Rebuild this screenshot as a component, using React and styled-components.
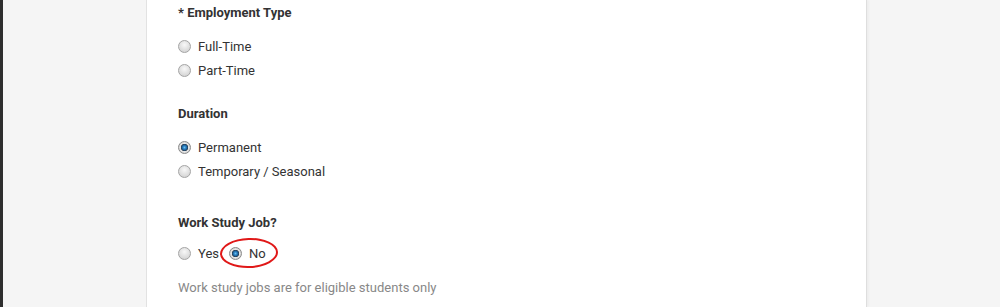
import React from "react";
import styled, { createGlobalStyle } from "styled-components";

const Global = createGlobalStyle`
  html, body { margin: 0; padding: 0; }
  body { font-family: Roboto, "Liberation Sans", Arial, sans-serif; overflow: hidden; }
`;

const Page = styled.div`
  display: flex;
  height: 307px;
  background: #f5f5f5;
  border-left: 3px solid #2e2e2e;
  box-sizing: border-box;
`;

const Panel = styled.div`
  margin-left: 143px;
  width: 721px;
  background: #fff;
  border-left: 1px solid #e2e2e2;
  border-right: 1px solid #dedede;
  box-shadow: 2px 0 2px rgba(0, 0, 0, 0.03);
  padding: 3px 0 0 31px;
  box-sizing: border-box;
`;

const Section = styled.section`
  margin-top: ${(p) => p.$top || 0}px;
`;

const Heading = styled.div`
  font-size: 13px;
  font-weight: 700;
  line-height: 20px;
  color: #333;
  margin-bottom: ${(p) => p.$gap ?? 11}px;
`;

const Options = styled.div`
  display: flex;
  flex-direction: ${(p) => (p.$inline ? "row" : "column")};
  gap: ${(p) => (p.$inline ? "10px" : "0")};
`;

const Option = styled.label`
  position: relative;
  display: flex;
  align-items: center;
  height: 24px;
  font-size: 13px;
  color: #333;
  gap: 7px;
`;

const Radio = styled.input.attrs({ type: "radio" })`
  appearance: none;
  -webkit-appearance: none;
  margin: 0;
  width: 13px;
  height: 13px;
  border-radius: 50%;
  border: 1px solid #a4a4a4;
  box-sizing: border-box;
  background: radial-gradient(circle at 50% 35%, #f8f8f8 0, #e4e4e4 45%, #cccccc 100%);
  &:checked {
    border-color: #8a8a8a;
    background: radial-gradient(
      circle at 50% 50%,
      #6cc0f0 0,
      #2a7fc0 1.6px,
      #1d5f98 2.6px,
      #2a3a4a 3.4px,
      #e6e6e6 4px,
      #d0d0d0 6px
    );
  }
`;

const Highlight = styled.span`
  position: absolute;
  left: -9px;
  top: -3px;
  width: 58px;
  height: 30px;
  border: 2px solid #e01818;
  border-bottom-width: 2.5px;
  border-radius: 50%;
  box-sizing: border-box;
  transform: rotate(-2deg);
  pointer-events: none;
`;

const Help = styled.div`
  font-size: 13px;
  line-height: 20px;
  color: #888;
  margin-top: 13px;
`;

export default function App() {
  return (
    <>
      <Global />
      <Page>
        <Panel>
          <Section>
            <Heading>* Employment Type</Heading>
            <Options>
              <Option><Radio name="emp" />Full-Time</Option>
              <Option><Radio name="emp" />Part-Time</Option>
            </Options>
          </Section>
          <Section $top={22}>
            <Heading>Duration</Heading>
            <Options>
              <Option><Radio name="dur" defaultChecked />Permanent</Option>
              <Option><Radio name="dur" />Temporary / Seasonal</Option>
            </Options>
          </Section>
          <Section $top={30}>
            <Heading $gap={8}>Work Study Job?</Heading>
            <Options $inline>
              <Option><Radio name="ws" />Yes</Option>
              <Option>
                <Radio name="ws" defaultChecked />No
                <Highlight />
              </Option>
            </Options>
            <Help>Work study jobs are for eligible students only</Help>
          </Section>
        </Panel>
      </Page>
    </>
  );
}
